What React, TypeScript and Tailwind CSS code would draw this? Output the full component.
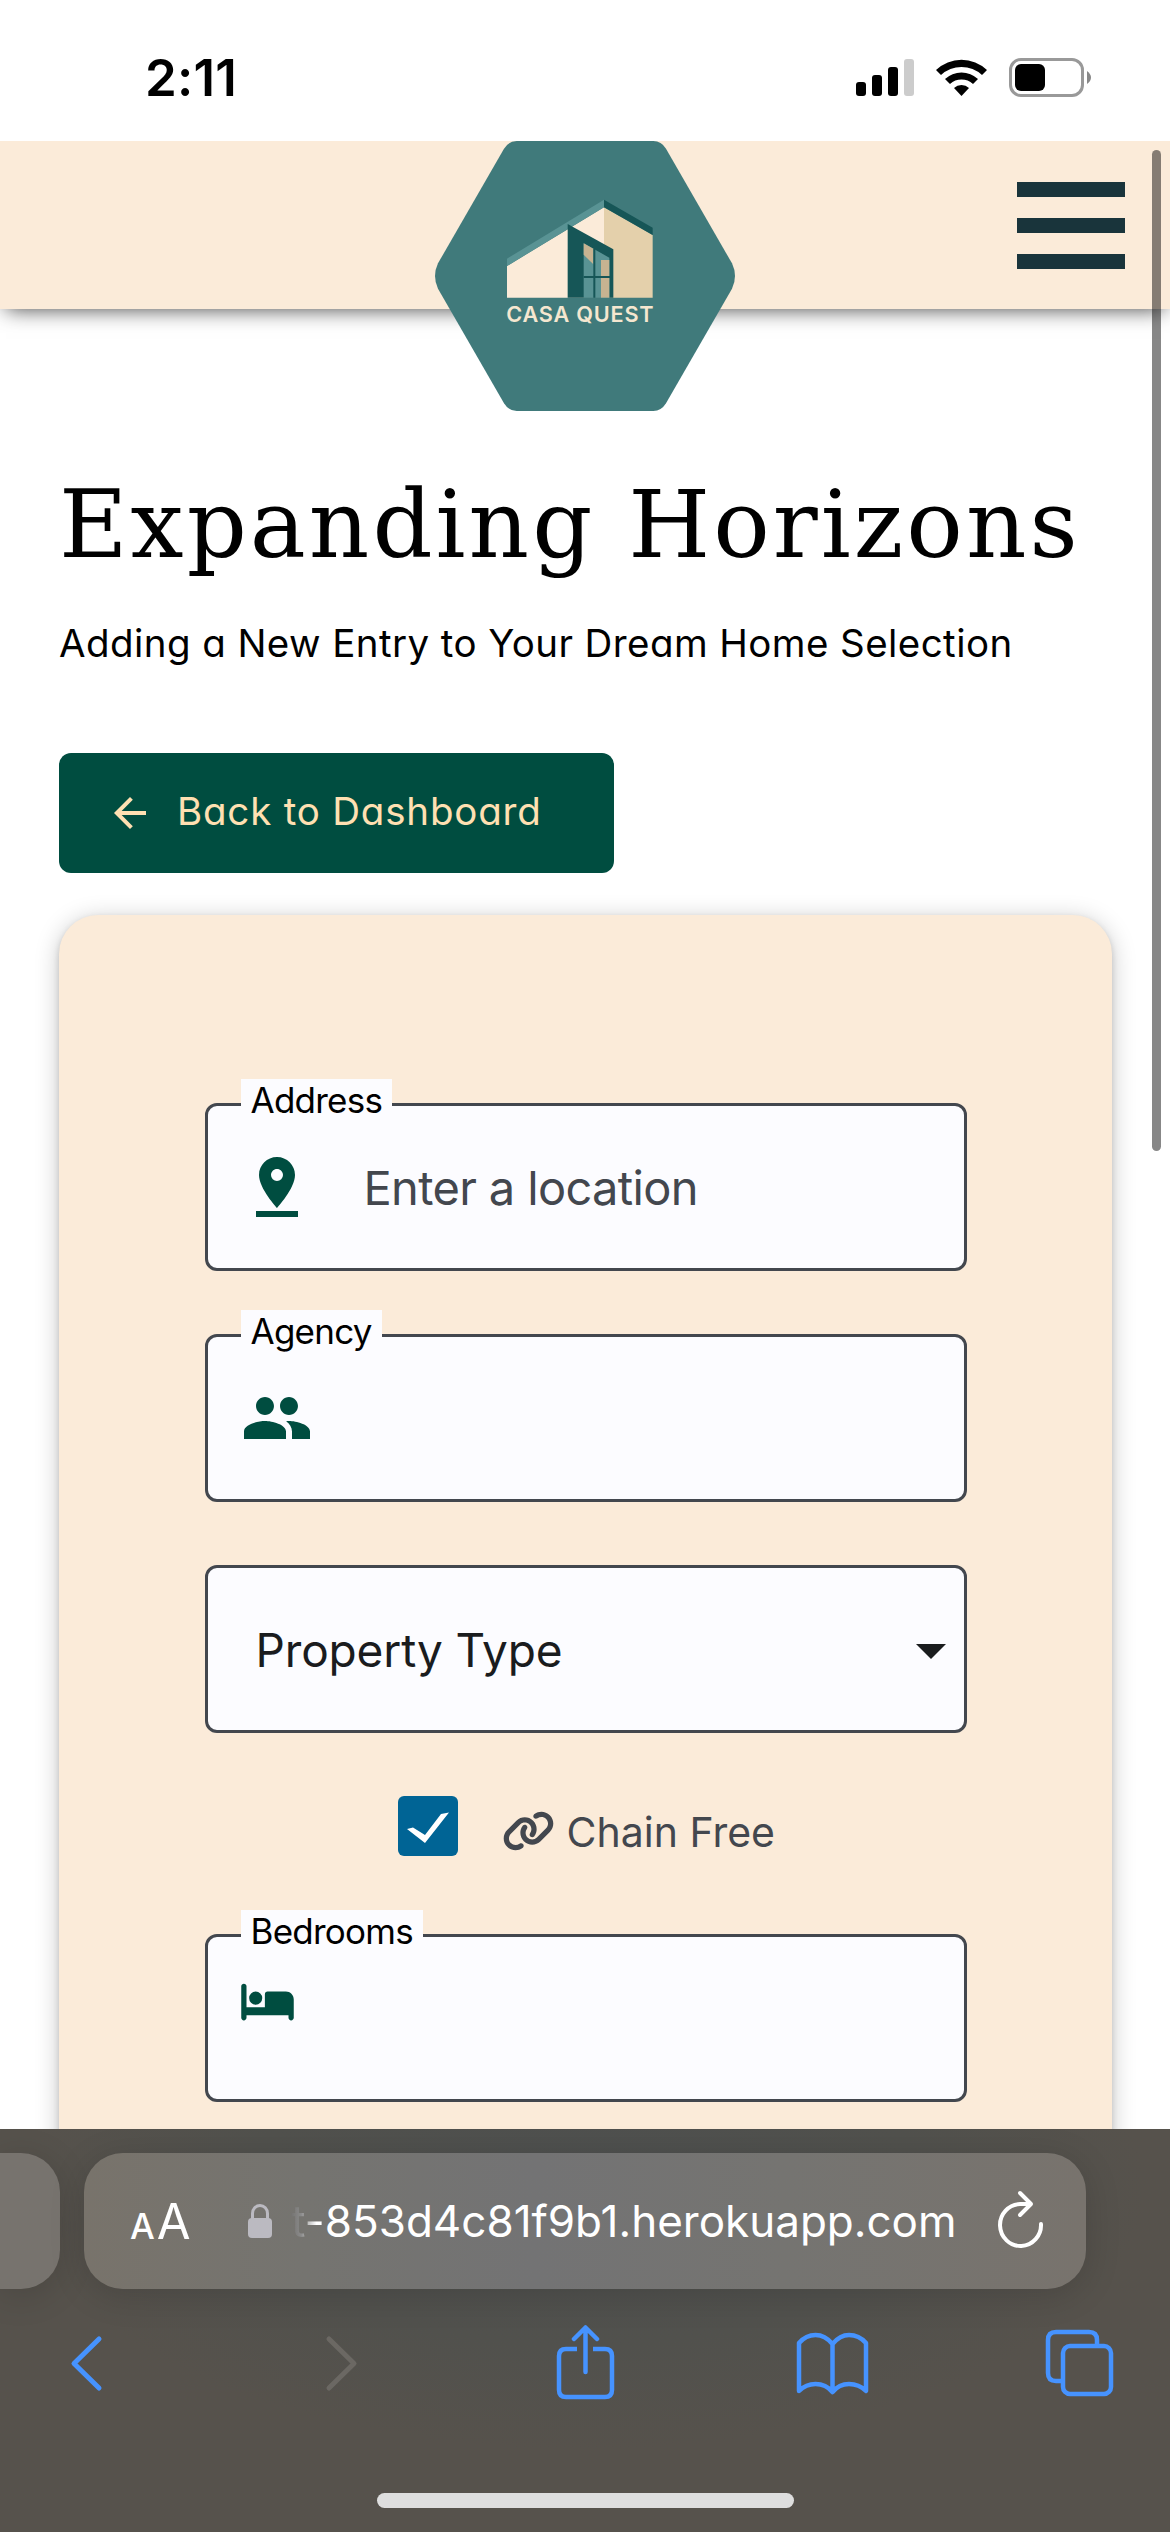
import React from "react";
import { FaBed, FaLink } from "react-icons/fa6";
import { MdArrowBack, MdPeople, MdPinDrop } from "react-icons/md";

function StatusBar() {
  return (
    <div className="relative z-20 flex h-[141px] shrink-0 items-start justify-between bg-white pl-[145px] pr-[78px]">
      <span className="mt-[48px] text-[51px] leading-[60px] font-semibold tracking-[0.200px]">2:11</span>
      <div className="mt-[58px] flex items-start">
        <svg className="mt-px" width="58" height="38" viewBox="0 0 58 38">
          <rect x="0" y="23" width="10" height="14" rx="3" />
          <rect x="16" y="16" width="10" height="21" rx="3" />
          <rect x="32" y="8" width="10" height="29" rx="3" />
          <rect x="48" y="0" width="10" height="37" rx="3" fill="#ccc" />
        </svg>
        <svg className="ml-[22px] mt-px" width="51" height="38" viewBox="0 0 51 38">
          <path d="M0 11 A37 37 0 0 1 51 11 L46 16 A30 30 0 0 0 5 16 Z" />
          <path d="M9 20 A24 24 0 0 1 42 20 L37 25 A17 17 0 0 0 14 25 Z" />
          <path d="M18 29 A11 11 0 0 1 33 29 L25.500 37 Z" />
        </svg>
        <svg className="ml-[22px]" width="83" height="39" viewBox="0 0 83 39">
          <rect x="1.500" y="1.500" width="72" height="36" rx="10.500" fill="none" stroke="#999" strokeWidth="3" />
          <rect x="6" y="6" width="30" height="27" rx="6" />
          <path d="M78 13 Q82 16 82 19.500 Q82 23 78 26 Z" fill="#888" />
        </svg>
      </div>
    </div>
  );
}

function Logo() {
  return (
    <svg className="absolute left-[420px] top-[-11px]" width="330" height="290" viewBox="0 0 990 870">
      <path
        d="M290 33 H700 Q724 33 738 56 L936 400 Q954 438 936 476 L738 820 Q724 843 700 843 H290 Q266 843 252 820 L54 476 Q36 438 54 400 L252 56 Q266 33 290 33 Z"
        fill="#407a7b"
      />
      <path d="M261 408 L552 232 V503 H261 Z" fill="#fbebd9" />
      <path d="M552 232 L698 315 V503 H552 Z" fill="#e4d0ab" />
      <path d="M261 386 L552 209 V232 L261 408 Z" fill="#599394" />
      <path d="M552 209 L698 293 V315 L552 232 Z" fill="#165657" />
      <path d="M443 282 L580 358 V503 H443 Z" fill="#165657" />
      <path d="M491 340 L568 383 V503 H491 Z" fill="#599394" />
      <path d="M491 340 L520 356 V403 L491 374 Z" fill="#c7b391" />
      <path d="M543 390 H568 V503 H543 Z" fill="#c7b391" />
      <path d="M523 356 V503 M491 441 H570" stroke="#165657" strokeWidth="6" />
      <text
        x="259"
        y="576"
        textLength="442"
        lengthAdjust="spacing"
        fontSize="65"
        fontWeight="600"
        fill="#f5e7d0"
        fontFamily="Inter, sans-serif"
      >
        CASA QUEST
      </text>
    </svg>
  );
}

function Header() {
  return (
    <header className="relative z-10 flex h-[168px] shrink-0 justify-end bg-[#fbebd9] pr-[45px] pt-[41px] shadow-[0_6px_20px_-6px_rgba(0,0,0,0.75)]">
      <Logo />
      <div className="flex flex-col gap-[21px]">
        <span className="h-[15px] w-[108px] bg-[#19343b]" />
        <span className="h-[15px] w-[108px] bg-[#19343b]" />
        <span className="h-[15px] w-[108px] bg-[#19343b]" />
      </div>
    </header>
  );
}

function Field({ label, children }: { label?: string; children?: React.ReactNode }) {
  return (
    <div className="relative flex h-[168px] w-[762px] shrink-0 items-start rounded-[12px] border-[3px] border-[#43474e] bg-[#fcfcff] pl-[33px]">
      {label && (
        <span className="absolute left-[33px] top-[-27px] h-[48px] bg-[#fcfcff] px-[10px] text-[35px] leading-[43px] tracking-[-0.750px] text-black">
          {label}
        </span>
      )}
      {children}
    </div>
  );
}

function PropertyForm() {
  return (
    <section className="mt-[42px] flex h-[1400px] w-[1053px] shrink-0 flex-col items-center rounded-[39px] bg-[#fbebd9] pt-[188px] shadow-[0_3px_6px_rgba(0,0,0,0.15),0_4px_24px_rgba(0,0,0,0.22)]">
      <Field label="Address">
        <MdPinDrop className="mt-[45px] size-[72px] text-[#004d40]" />
        <span className="ml-[51px] mt-[52px] text-[47px] leading-[60px] tracking-[-0.650px] text-[#43474e]">Enter a location</span>
      </Field>
      <div className="h-[63px] shrink-0" />
      <Field label="Agency">
        <MdPeople className="mt-[45px] size-[72px] text-[#004d40]" />
      </Field>
      <div className="h-[63px] shrink-0" />
      <Field>
        <span className="ml-[15px] mt-[50px] text-[46px] leading-[64px] tracking-[-0.150px] text-[#1a1c1e]">Property Type</span>
        <svg className="ml-auto mr-[18px] mt-[76px]" width="30" height="15" viewBox="0 0 30 15">
          <path d="M0 0 H30 L15 15 Z" fill="#1a1c1e" />
        </svg>
      </Field>
      <div className="mt-[63px] flex h-[60px] w-[762px] shrink-0 items-start pl-[193px]">
        <svg width="60" height="60" viewBox="0 0 60 60">
          <rect width="60" height="60" rx="6" fill="#006495" />
          <path d="M9 33 L15 31.500 L27 39 L43 18 L51 16.500 L27 47 Z" fill="#fff" />
        </svg>
        <FaLink className="ml-[44px] mt-[14px] h-[42px] w-[53px] text-[#43474e]" />
        <span className="ml-[12px] mt-[6px] text-[41px] leading-[60px] text-[#43474e]">Chain Free</span>
      </div>
      <div className="h-[78px] shrink-0" />
      <Field label="Bedrooms">
        <FaBed className="mt-[44px] h-[42px] w-[53px] text-[#004d40]" />
      </Field>
    </section>
  );
}

function BrowserBar() {
  return (
    <footer className="relative z-20 flex h-[403px] shrink-0 flex-col bg-[#56524c] bg-[radial-gradient(ellipse_560px_260px_at_50%_15%,#4e504f_0%,#51514d_60%,#56524c_100%)] pt-[24px]">
      <div className="flex h-[136px] shrink-0 gap-[24px]">
        <div className="w-[60px] rounded-r-[39px] bg-[#77736e] shadow-[0_6px_36px_rgba(0,0,0,0.14)]" />
        <div className="flex w-[1002px] items-center rounded-[39px] bg-[linear-gradient(90deg,#78736b_0%,#757470_22%,#737374_45%,#757471_70%,#78736d_100%)] pl-[46px] text-white shadow-[0_6px_36px_rgba(0,0,0,0.14)]">
          <span className="flex w-[60px] items-baseline gap-[3px] leading-none">
            <span className="text-[35px] font-medium">A</span>
            <span className="-ml-px text-[49px]">A</span>
          </span>
          <svg className="ml-[58px]" width="24" height="34" viewBox="0 0 24 34">
            <rect x="0" y="14" width="24" height="20" rx="4" fill="#bbbac1" />
            <path d="M4.500 16 V9.500 A7.500 8 0 0 1 19.500 9.500 V16" fill="none" stroke="#bbbac1" strokeWidth="3" />
          </svg>
          <span className="ml-[19px] w-[664px] whitespace-nowrap text-[44px] leading-[60px]">
            <span className="bg-[linear-gradient(90deg,#747371_0%,#8b8b8b_30%,#ffffff_75%)] bg-clip-text text-transparent">t-</span>
            853d4c81f9b1.herokuapp.com
          </span>
          <svg className="ml-[43px] mt-[-4px]" width="46" height="58" viewBox="0 0 46 58" fill="none" stroke="#fff" strokeWidth="4" strokeLinecap="round" strokeLinejoin="round">
            <path d="M43 34 A20.500 21 0 1 1 22 14 H31" />
            <path d="M22 3 L33 14 L22 25" />
          </svg>
        </div>
      </div>
      <nav className="mt-[32px] flex h-[84px] shrink-0 items-center pl-[69px] text-[#4693ff]">
        <svg width="36" height="60" viewBox="0 0 36 60" fill="none" stroke="currentColor" strokeWidth="5" strokeLinecap="round" strokeLinejoin="round">
          <path d="M30 6 L5 30.500 L30 55" />
        </svg>
        <svg className="ml-[218px]" width="36" height="60" viewBox="0 0 36 60" fill="none" stroke="#6b6863" strokeWidth="5" strokeLinecap="round" strokeLinejoin="round">
          <path d="M6 6 L31 30.500 L6 55" />
        </svg>
        <svg className="ml-[196px]" width="61" height="76" viewBox="0 0 61 76" fill="none" stroke="currentColor" strokeWidth="4.500" strokeLinecap="round" strokeLinejoin="round">
          <path d="M22 24 H11 Q4 24 4 31 V65 Q4 72 11 72 H50 Q57 72 57 65 V31 Q57 24 50 24 H38" strokeLinecap="butt" />
          <path d="M30.500 47 V3 M19 14 L30.500 2.500 L42 14" />
        </svg>
        <svg className="ml-[179px]" width="75" height="64" viewBox="0 0 75 64" fill="none" stroke="currentColor" strokeWidth="4.500" strokeLinecap="round" strokeLinejoin="round">
          <path d="M37.500 13 Q30 4 20.500 4 Q11 4 4 12 V60 Q11 53 20.500 53 Q31 53 37.500 61 Q44 53 54 53 Q64 53 71 60 V12 Q64 4 54 4 Q45 4 37.500 13 V61" />
        </svg>
        <svg className="ml-[174px]" width="71" height="70" viewBox="0 0 71 70" fill="none" stroke="currentColor" strokeWidth="4.500">
          <path d="M18 53 H12 Q4 53 4 45 V12 Q4 4 12 4 H45 Q53 4 53 12 V18" />
          <rect x="19" y="18" width="48" height="48" rx="7" />
        </svg>
      </nav>
      <div className="mx-auto mt-[88px] h-[15px] w-[417px] shrink-0 rounded-full bg-[#dedede]" />
    </footer>
  );
}

export default function App() {
  return (
    <div className="relative flex h-[2532px] w-[1170px] flex-col overflow-hidden bg-white font-['Inter',sans-serif] text-black">
      <StatusBar />
      <Header />
      <main className="flex h-[1820px] shrink-0 flex-col items-start overflow-hidden px-[59px] pt-[165px]">
        <h1 className="h-[100px] whitespace-nowrap font-['DejaVu_Serif',serif] text-[94px] leading-[102px] tracking-[3px]">
          Expanding Horizons
        </h1>
        <p className="mt-[39px] h-[60px] whitespace-nowrap text-[38.500px] leading-[60px] tracking-[0.420px] [font-feature-settings:'cv11'_1]">
          Adding a New Entry to Your Dream Home Selection
        </p>
        <button className="mt-[80px] flex h-[120px] w-[555px] shrink-0 items-center rounded-[12px] bg-[#004d40] pl-[47px] text-[#ffe0b2]">
          <MdArrowBack className="size-[48px]" />
          <span className="-mt-[4px] ml-[23px] whitespace-nowrap text-[38.500px] leading-[60px] tracking-[0.800px] [font-feature-settings:'cv11'_1]">Back to Dashboard</span>
        </button>
        <PropertyForm />
      </main>
      <BrowserBar />
      <div className="absolute left-[1152px] top-[150px] z-30 h-[1001px] w-[9px] rounded-full bg-black/47" />
    </div>
  );
}
